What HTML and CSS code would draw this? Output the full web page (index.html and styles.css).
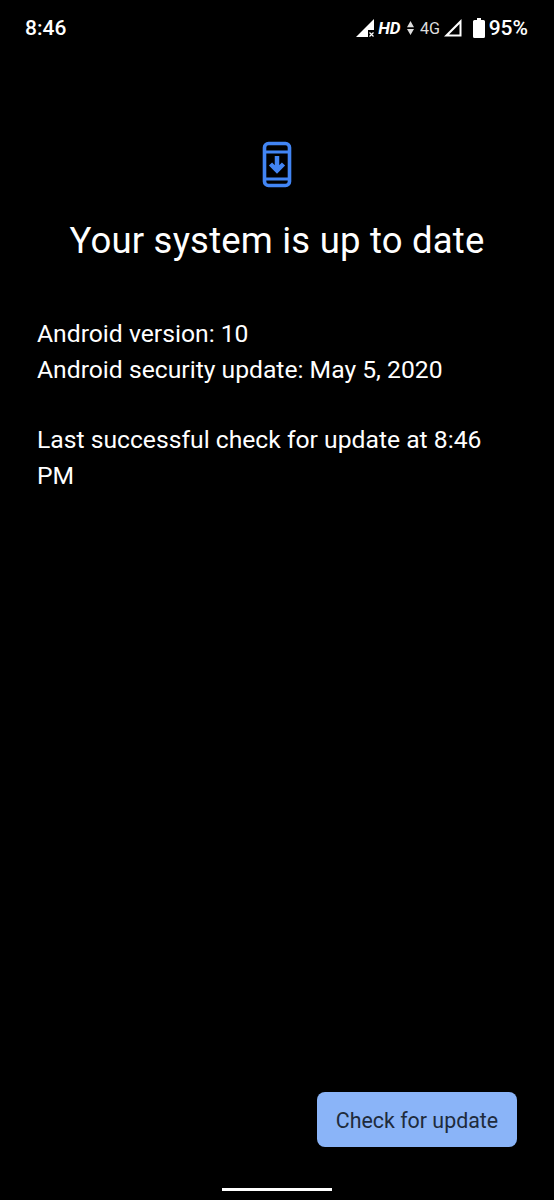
FILE: index.html
```html
<!DOCTYPE html>
<html lang="en">
<head>
  <meta charset="UTF-8">
  <meta name="viewport" content="width=device-width, initial-scale=1.0">
  <title>System update</title>
  <link rel="stylesheet" href="styles.css">
</head>
<body>
  <div class="screen">
    <div class="status-bar">
      <span class="clock">8:46</span>
      <div class="status-icons">
        <svg class="signal" width="20" height="20" viewBox="0 0 20 20">
          <path d="M1 19 L19 1 V12 H13 V19 Z" fill="#fff"/>
          <path d="M14.500 14.500 L18.500 18.500 M18.500 14.500 L14.500 18.500" stroke="#fff" stroke-width="1.2"/>
        </svg>
        <span class="hd">HD</span>
        <svg class="arrows" width="7" height="16" viewBox="0 0 8 16">
          <path d="M4 0 L8 7 H0 Z M0 9 H8 L4 16 Z" fill="#ddd"/>
        </svg>
        <span class="net">4G</span>
        <svg class="signal-two" width="20" height="20" viewBox="0 0 20 20">
          <path fill-rule="evenodd" d="M1 18.500 L18.500 1 V18.500 Z M6 16.500 H16.500 V6 Z" fill="#fff"/>
        </svg>
        <svg class="battery" width="12" height="20" viewBox="0 0 12 20">
          <path d="M4 0 H8 V2 H10.500 Q12 2 12 3.500 V18.500 Q12 20 10.500 20 H1.500 Q0 20 0 18.500 V3.500 Q0 2 1.500 2 H4 Z" fill="#fff"/>
        </svg>
        <span class="percent">95%</span>
      </div>
    </div>

    <div class="content">
      <svg class="update-icon" width="30" height="48" viewBox="0 0 30 48">
        <rect x="2.500" y="2.500" width="25" height="42" rx="4" fill="none" stroke="#4285f4" stroke-width="3.600"/>
        <path d="M2 11 H28 M2 38 H28" stroke="#4285f4" stroke-width="3"/>
        <path d="M15 15 V29 M8.500 23 L15 29.500 L21.500 23" fill="none" stroke="#4285f4" stroke-width="4.500"/>
      </svg>
      <h1>Your system is up to date</h1>
      <div class="info">
        <p>Android version: 10<br>Android security update: May 5, 2020</p>
        <p>Last successful check for update at 8:46 PM</p>
      </div>
    </div>

    <div class="actions">
      <button class="check-button">Check for update</button>
    </div>
    <div class="nav-handle"></div>
  </div>
</body>
</html>
```
FILE: styles.css
```css
* {
  box-sizing: border-box;
}

html, body {
  margin: 0;
  background: #000;
}

.screen {
  width: 554px;
  height: 1200px;
  display: flex;
  flex-direction: column;
  color: #fff;
  font-family: Roboto, "Liberation Sans", sans-serif;
}

.status-bar {
  height: 56px;
  padding: 0 26px 0 25px;
  display: flex;
  justify-content: space-between;
  align-items: center;
}

.clock {
  font-size: 21px;
  font-weight: 500;
}

.status-icons {
  display: flex;
  align-items: center;
}

.hd {
  font-size: 17px;
  font-weight: 700;
  font-style: italic;
  margin-left: 3px;
}

.arrows {
  margin-left: 6px;
}

.net {
  font-size: 17px;
  color: #ddd;
  margin-left: 6px;
  transform: scaleX(0.95);
  transform-origin: left;
}

.signal-two {
  margin-left: 2px;
}

.battery {
  margin-left: 10px;
}

.percent {
  font-size: 21px;
  font-weight: 500;
  margin-left: 4px;
}

.content {
  flex: 1;
  padding: 85px 37px 0;
  display: flex;
  flex-direction: column;
}

.update-icon {
  align-self: center;
  margin-left: -1px;
}

h1 {
  margin: 28px -20px 0;
  font-size: 36.500px;
  font-weight: 400;
  line-height: 48px;
  text-align: center;
  letter-spacing: 0.2px;
}

.info {
  margin-top: 51px;
  font-size: 24.700px;
  line-height: 35.500px;
}

.info p {
  margin: 0 0 35px;
}

.actions {
  display: flex;
  justify-content: flex-end;
  padding-right: 37px;
}

.check-button {
  width: 200px;
  height: 55px;
  padding-top: 3px;
  border: none;
  border-radius: 8px;
  background: #8ab4f8;
  color: #202b3c;
  font-family: inherit;
  font-size: 21.400px;
}

.nav-handle {
  width: 110px;
  height: 3px;
  margin: 41px auto 9px;
  background: #fff;
}
```
